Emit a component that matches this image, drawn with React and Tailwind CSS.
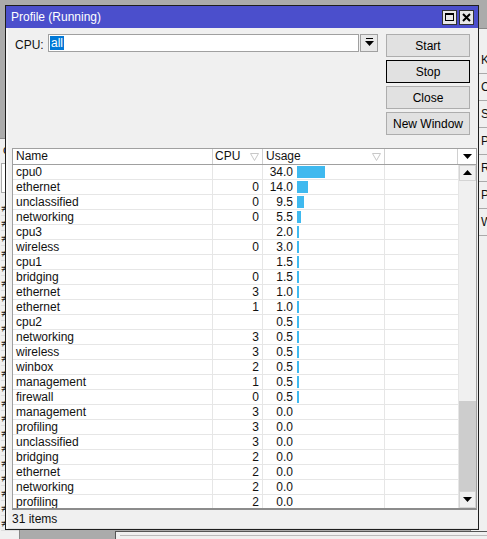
import React from 'react';

const rows = [
  ['cpu0', '', '34.0', 28],
  ['ethernet', '0', '14.0', 11],
  ['unclassified', '0', '9.5', 7],
  ['networking', '0', '5.5', 4],
  ['cpu3', '', '2.0', 2],
  ['wireless', '0', '3.0', 2],
  ['cpu1', '', '1.5', 2],
  ['bridging', '0', '1.5', 2],
  ['ethernet', '3', '1.0', 2],
  ['ethernet', '1', '1.0', 2],
  ['cpu2', '', '0.5', 2],
  ['networking', '3', '0.5', 2],
  ['wireless', '3', '0.5', 2],
  ['winbox', '2', '0.5', 2],
  ['management', '1', '0.5', 2],
  ['firewall', '0', '0.5', 2],
  ['management', '3', '0.0', 0],
  ['profiling', '3', '0.0', 0],
  ['unclassified', '3', '0.0', 0],
  ['bridging', '2', '0.0', 0],
  ['ethernet', '2', '0.0', 0],
  ['networking', '2', '0.0', 0],
  ['profiling', '2', '0.0', 0],
];

const FilterMark = () => (
  <svg width="9" height="8" viewBox="0 0 9 8" className="shrink-0">
    <path d="M0.5 0.5 H8.5 L4.5 7.5 Z" fill="none" stroke="#c8c8c8" strokeWidth="1" />
  </svg>
);

const ArrowDown = () => (
  <svg width="9" height="8" viewBox="0 0 9 8">
    <path d="M0 1 H9 L4.5 6 Z" fill="#000" />
  </svg>
);

const ArrowUp = () => (
  <svg width="9" height="8" viewBox="0 0 9 8">
    <path d="M0 6 H9 L4.5 1 Z" fill="#000" />
  </svg>
);

const Btn = ({ children, focused }) => (
  <button
    className={
      'h-[23px] w-[84px] bg-[#e1e1e1] text-[12px] text-black ' +
      (focused ? 'border border-black' : 'border border-[#adadad]')
    }
  >
    {children}
  </button>
);

export default function App() {
  return (
    <div className="relative w-[487px] h-[539px] overflow-hidden bg-[#ababab] font-['Liberation_Sans',sans-serif] text-[12px] text-[#111]">
      {/* desktop: windows behind */}
      <div className="absolute left-[-60px] top-[138px] w-[80px] h-[420px] bg-[#f0f0f0] border border-[#888]">
        <div className="mt-[4px] ml-[62px] text-[12px] leading-[14px]">or</div>
        <div className="ml-[60px] mt-[6px] h-[30px] border border-[#aaa] bg-white" />
        <div className="ml-[60px] mt-[8px] flex flex-col">
          {Array.from({ length: 22 }).map((_, i) => (
            <div key={i} className="h-[15px] border-b border-[#ddd] text-[11px] leading-[15px]">
              ≠
            </div>
          ))}
        </div>
      </div>
      <div className="absolute left-[470px] top-[28px] w-[60px] h-[520px] bg-[#f0f0f0] border border-[#888]">
        <div className="mt-[18px] flex flex-col text-[12px]">
          {['K', 'C', 'SI', 'PU', 'RO', 'PS', 'W'].map((t) => (
            <div key={t} className="h-[27px] border-b border-[#aaa] pl-[10px] leading-[26px]">
              {t}
            </div>
          ))}
        </div>
      </div>
      <div className="absolute left-[115px] top-[531px] w-[400px] h-[20px] bg-[#f0f0f0] border border-[#555]">
        <div className="mt-[3px] ml-[4px] h-[1px] bg-[#bbb]" />
      </div>

      {/* Profile window */}
      <div className="absolute left-[5px] top-[5px] w-[474px] h-[525px] border border-[#1e1e1e] bg-[#f0f0f0] flex flex-col">
        <div className="h-[22px] shrink-0 bg-[#4b4fcc] flex items-center justify-between pl-[5px] pr-[4px]">
          <span className="text-white text-[12px]">Profile (Running)</span>
          <div className="flex gap-[2px]">
            <div className="w-[15px] h-[15px] bg-[#e8e8e8] border border-[#333] flex items-center justify-center">
              <div className="w-[9px] h-[8px] border border-black border-t-2" />
            </div>
            <div className="w-[15px] h-[15px] bg-[#e8e8e8] border border-[#333] flex items-center justify-center">
              <svg width="9" height="9" viewBox="0 0 9 9">
                <path d="M1 1 L8 8 M8 1 L1 8" stroke="#000" strokeWidth="2" />
              </svg>
            </div>
          </div>
        </div>

        <div className="flex-1 flex flex-col border-l-2 border-[#f8f8f8]">
          {/* top controls */}
          <div className="flex h-[120px] shrink-0 pt-[6px]">
            <div className="flex-1 flex items-start pl-[7px]">
              <span className="mt-[2px] w-[33px]">CPU:</span>
              <div className="w-[311px] h-[18px] bg-white border border-[#a0a0a0] flex items-center pl-[1px]">
                <span className="bg-[#0078d7] text-white leading-[14px] px-[1px]">all</span>
              </div>
              <div className="ml-[1px] w-[18px] h-[18px] bg-[#e8e8e8] border border-[#a0a0a0] flex flex-col items-center justify-center">
                <div className="w-[7px] h-[1px] bg-black mb-[1px]" />
                <ArrowDown />
              </div>
            </div>
            <div className="flex flex-col gap-[3px] pr-[8px]">
              <Btn>Start</Btn>
              <Btn focused>Stop</Btn>
              <Btn>Close</Btn>
              <Btn>New Window</Btn>
            </div>
          </div>

          {/* table */}
          <div className="ml-[4px] mr-[1px] h-[362px] border border-[#a0a0a0] border-b-2 border-b-[#8c8c8c] bg-white flex flex-col">
            <div className="h-[16px] shrink-0 flex border-b border-[#a0a0a0] bg-white">
              <div className="w-[200px] border-r border-[#d0d0d0] pl-[3px] leading-[15px]">Name</div>
              <div className="w-[50px] border-r border-[#d0d0d0] pl-[2px] pr-[3px] flex items-center justify-between leading-[15px]">
                <span>CPU</span>
                <FilterMark />
              </div>
              <div className="w-[122px] border-r border-[#d0d0d0] pl-[3px] pr-[3px] flex items-center justify-between leading-[15px]">
                <span>Usage</span>
                <FilterMark />
              </div>
              <div className="flex-1 border-r border-[#d0d0d0]" />
              <div className="w-[18px] flex items-center justify-center">
                <ArrowDown />
              </div>
            </div>
            <div className="flex-1 flex min-h-0">
              <div className="flex-1 flex flex-col overflow-hidden">
                {rows.map(([name, cpu, usage, bar], i) => (
                  <div key={i} className="h-[15px] shrink-0 flex border-b border-[#e6e6e6] leading-[14px]">
                    <div className="w-[200px] border-r border-[#e6e6e6] pl-[3px]">{name}</div>
                    <div className="w-[50px] border-r border-[#e6e6e6] pr-[3px] text-right">{cpu}</div>
                    <div className="w-[122px] border-r border-[#e6e6e6] flex items-center">
                      <span className="w-[30px] text-right">{usage}</span>
                      {bar > 0 && (
                        <div className="ml-[4px] h-[12px] bg-[#3fb9ef]" style={{ width: bar }} />
                      )}
                    </div>
                    <div className="flex-1" />
                  </div>
                ))}
              </div>
              <div className="w-[18px] shrink-0 flex flex-col bg-[#f0f0f0] border-l border-[#e6e6e6]">
                <div className="h-[16px] bg-[#f0f0f0] border border-[#d4d4d4] flex items-center justify-center">
                  <ArrowUp />
                </div>
                <div className="flex-1 bg-[#f0f0f0]" />
                <div className="h-[90px] bg-[#cdcdcd]" />
                <div className="h-[17px] bg-[#f0f0f0] border border-[#d4d4d4] flex items-center justify-center">
                  <ArrowDown />
                </div>
              </div>
            </div>
          </div>

          {/* status */}
          <div className="flex-1 flex items-center pl-[4px] border-b border-[#e0e0e0]">
            <span>31 items</span>
          </div>
        </div>
      </div>
    </div>
  );
}
